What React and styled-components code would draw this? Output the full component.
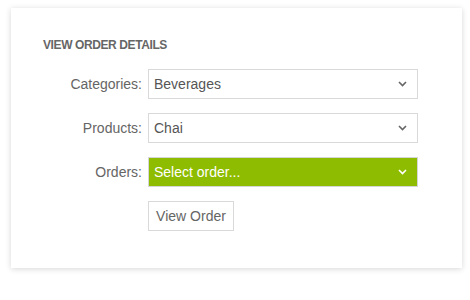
import React, { useState } from 'react';
import styled, { createGlobalStyle } from 'styled-components';

const GlobalStyle = createGlobalStyle`
  body {
    margin: 0;
    background: #fff;
    font-family: "Liberation Sans", Arial, sans-serif;
  }
`;

const Page = styled.div`
  padding: 8px 8px 20px 11px;
`;

const Card = styled.div`
  box-sizing: border-box;
  width: 451px;
  height: 260px;
  padding: 30px 32px;
  background: #fff;
  box-shadow: 0 1px 6px rgba(0, 0, 0, 0.16);
`;

const Heading = styled.h4`
  margin: 0 0 17px;
  font-size: 12px;
  line-height: 14px;
  font-weight: bold;
  letter-spacing: -0.4px;
  text-transform: uppercase;
  color: #666;
`;

const Form = styled.div`
  display: grid;
  grid-template-columns: 99px 270px;
  column-gap: 6px;
  row-gap: 14px;
  align-items: center;
`;

const Label = styled.label`
  text-align: right;
  font-size: 14px;
  color: #656565;
`;

const Select = styled.div`
  box-sizing: border-box;
  height: 30px;
  display: flex;
  align-items: center;
  justify-content: space-between;
  padding: 0 10px 0 5px;
  border: 1px solid ${({ $active }) => ($active ? '#d5d5d5' : '#d9d9d9')};
  background: ${({ $active }) => ($active ? '#8ebc00' : '#fff')};
  color: ${({ $active }) => ($active ? '#fff' : '#555')};
  font-size: 14px;
  cursor: pointer;
`;

const Button = styled.button`
  grid-column: 2;
  justify-self: start;
  box-sizing: border-box;
  width: 86px;
  height: 30px;
  padding: 0;
  border: 1px solid #d9d9d9;
  background: #fff;
  color: #656565;
  font-family: inherit;
  font-size: 14px;
`;

const Chevron = ({ color }) => (
  <svg width="9" height="6" viewBox="0 0 9 6">
    <path d="M1 1l3.5 3.5L8 1" fill="none" stroke={color} strokeWidth="1.6" />
  </svg>
);

const Dropdown = ({ value, active }) => (
  <Select $active={active}>
    <span>{value}</span>
    <Chevron color={active ? '#fff' : '#666'} />
  </Select>
);

const App = () => {
  const [category] = useState('Beverages');
  const [product] = useState('Chai');

  return (
    <Page>
      <GlobalStyle />
      <Card>
        <Heading>View Order Details</Heading>
        <Form>
          <Label>Categories:</Label>
          <Dropdown value={category} />
          <Label>Products:</Label>
          <Dropdown value={product} />
          <Label>Orders:</Label>
          <Dropdown value="Select order..." active />
          <Button>View Order</Button>
        </Form>
      </Card>
    </Page>
  );
};

export default App;
